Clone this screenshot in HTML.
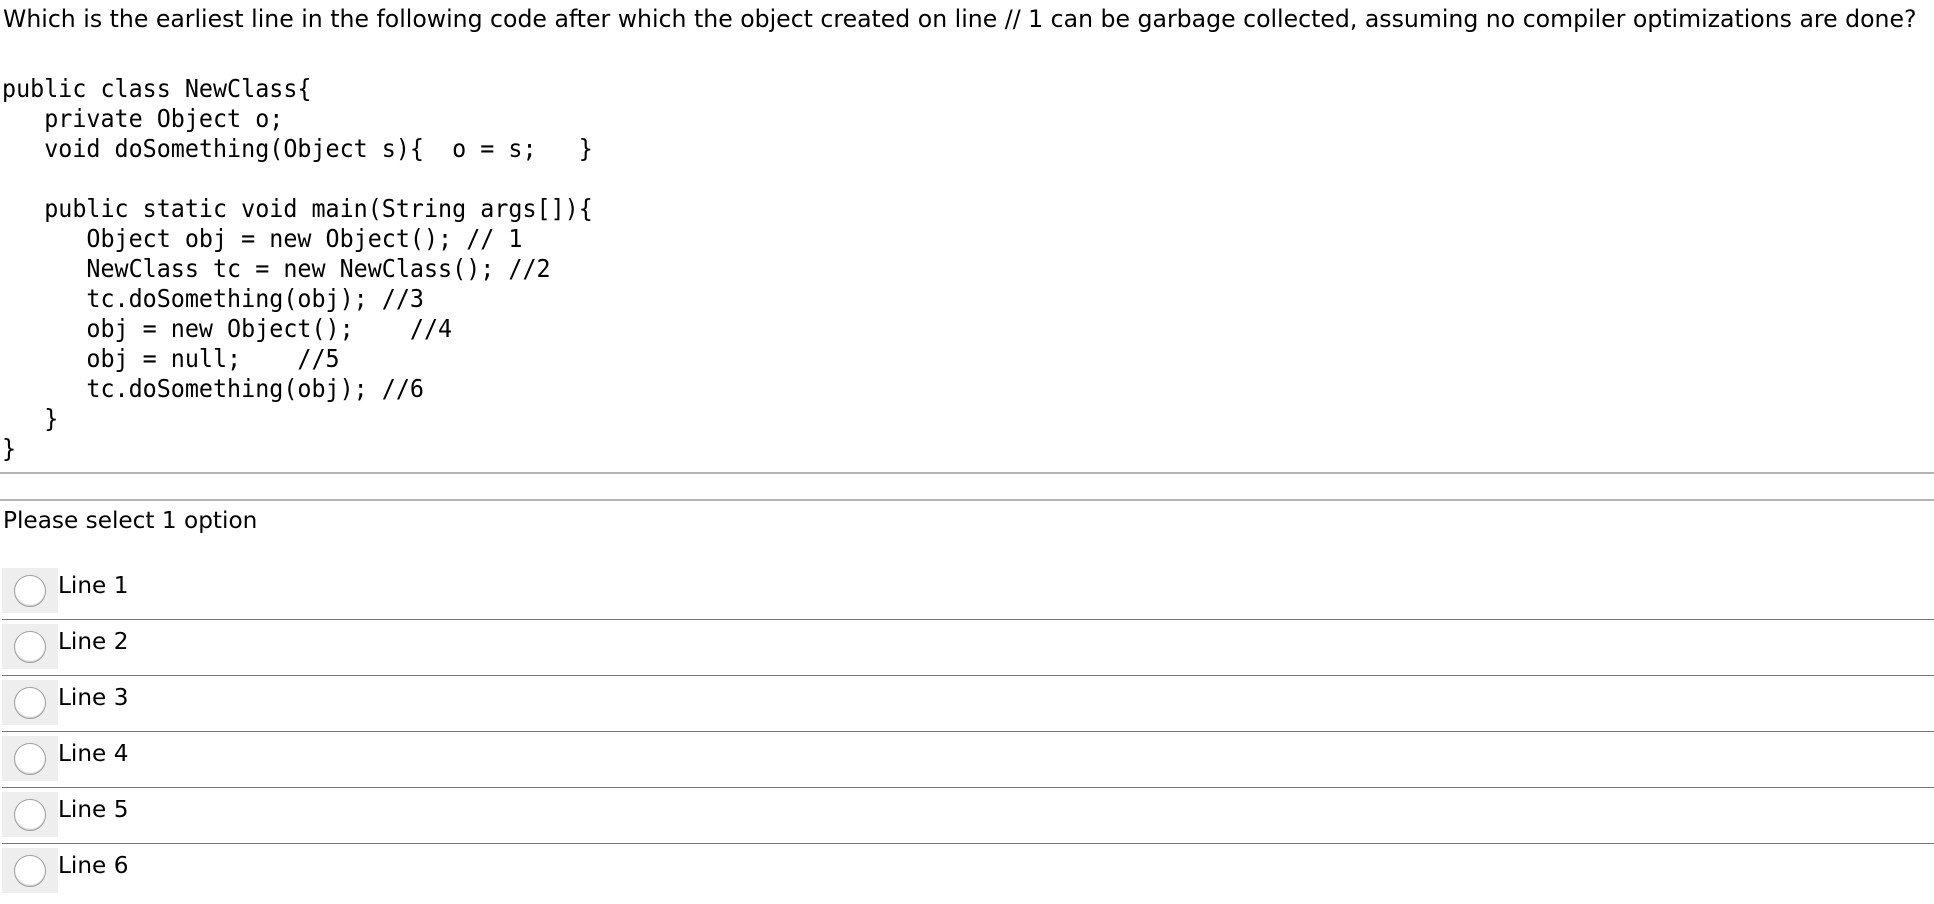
<!DOCTYPE html>
<html><head><meta charset="utf-8"><style>
body{margin:0;width:1934px;height:892px;overflow:hidden;background:#fff;color:#000;font-family:"DejaVu Sans","Liberation Sans",sans-serif;}
.q{position:absolute;left:3px;top:5px;font-size:23.6px;white-space:nowrap;}
pre{position:absolute;left:2px;top:74px;margin:0;font-family:"DejaVu Sans Mono","Liberation Mono",monospace;font-size:24.6px;line-height:30px;transform:scaleX(0.95);transform-origin:0 0;}
.hr{position:absolute;left:0;width:1934px;height:2px;background:#b4b4b4;}
.ps{position:absolute;left:3px;top:507px;font-size:23.2px;white-space:nowrap;}
.opt{position:absolute;left:2px;width:1932px;height:56px;}
.box{position:absolute;left:0;top:0;width:56px;height:45px;background:#eee;}
.rad{position:absolute;left:12px;top:7px;width:32px;height:32px;border-radius:50%;border:1px solid #a0a0a0;background:#fff;box-sizing:border-box;box-shadow:inset 0 -1px 1px #ccc;}
.lbl{position:absolute;left:56px;top:4px;font-size:23.2px;}
.div{position:absolute;left:0;top:51px;width:1932px;height:1px;background:#777;}
</style></head><body>
<div class="q">Which is the earliest line in the following code after which the object created on line // 1 can be garbage collected, assuming no compiler optimizations are done?</div>
<pre>public class NewClass{
   private Object o;
   void doSomething(Object s){  o = s;   }

   public static void main(String args[]){
      Object obj = new Object(); // 1
      NewClass tc = new NewClass(); //2
      tc.doSomething(obj); //3
      obj = new Object();    //4
      obj = null;    //5
      tc.doSomething(obj); //6
   }
}</pre>
<div class="hr" style="top:472px"></div>
<div class="hr" style="top:499px"></div>
<div class="ps">Please select 1 option</div>
<div class="opt" style="top:568px"><div class="box"><div class="rad"></div></div><div class="lbl">Line 1</div><div class="div"></div></div>
<div class="opt" style="top:624px"><div class="box"><div class="rad"></div></div><div class="lbl">Line 2</div><div class="div"></div></div>
<div class="opt" style="top:680px"><div class="box"><div class="rad"></div></div><div class="lbl">Line 3</div><div class="div"></div></div>
<div class="opt" style="top:736px"><div class="box"><div class="rad"></div></div><div class="lbl">Line 4</div><div class="div"></div></div>
<div class="opt" style="top:792px"><div class="box"><div class="rad"></div></div><div class="lbl">Line 5</div><div class="div"></div></div>
<div class="opt" style="top:848px"><div class="box"><div class="rad"></div></div><div class="lbl">Line 6</div></div>
</body></html>
